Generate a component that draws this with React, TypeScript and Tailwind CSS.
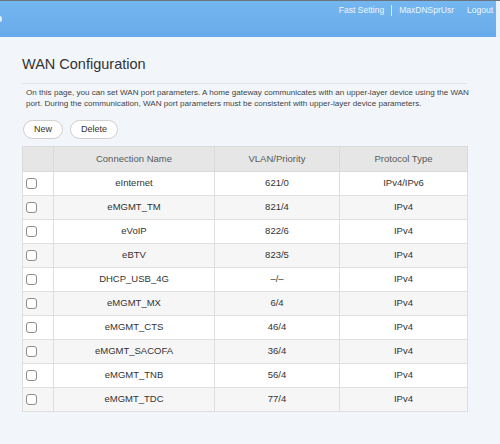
const rows = [
  { name: "eInternet", vlan: "621/0", proto: "IPv4/IPv6" },
  { name: "eMGMT_TM", vlan: "821/4", proto: "IPv4" },
  { name: "eVoIP", vlan: "822/6", proto: "IPv4" },
  { name: "eBTV", vlan: "823/5", proto: "IPv4" },
  { name: "DHCP_USB_4G", vlan: "–/–", proto: "IPv4" },
  { name: "eMGMT_MX", vlan: "6/4", proto: "IPv4" },
  { name: "eMGMT_CTS", vlan: "46/4", proto: "IPv4" },
  { name: "eMGMT_SACOFA", vlan: "36/4", proto: "IPv4" },
  { name: "eMGMT_TNB", vlan: "56/4", proto: "IPv4" },
  { name: "eMGMT_TDC", vlan: "77/4", proto: "IPv4" },
];

const TopBar = () => (
  <header className="flex h-[37px] border-t border-[#6b7480]">
    <div className="relative flex-1 bg-gradient-to-b from-[#74b6ef] to-[#68abea]">
      <div className="absolute left-[-3px] top-[15px] h-[6px] w-[5px] rounded-full bg-white/80" />
      <nav className="flex items-center justify-end pt-[3px] pr-[3px] text-[8.5px] text-[#eef6fd]">
        <span>Fast Setting</span>
        <span className="mx-[7px] h-[11px] w-px bg-white/70" />
        <span>MaxDNSprUsr</span>
        <span className="ml-[13px]">Logout</span>
      </nav>
    </div>
    <div className="w-[4px] bg-[#eaf2fb]" />
  </header>
);

const Checkbox = () => (
  <span className="block h-[11px] w-[11px] rounded-[3px] border border-[#8c8c8c] bg-white" />
);

export default function App() {
  return (
    <div
      className="h-[444px] w-[500px] overflow-hidden bg-[#f2f6fb] text-[#333]"
      style={{ fontFamily: '"Liberation Sans", Arial, sans-serif' }}
    >
      <TopBar />
      <main className="pl-[22px]">
        <h1 className="mt-[16px] text-[14.5px] leading-[22px] text-[#333]">WAN Configuration</h1>
        <div className="mt-[8px] h-px w-[445px] bg-[#e1e5ea]" />
        <p className="mt-[4px] w-[450px] pl-[4px] text-[8.1px] leading-[10.5px] text-[#444]">
          On this page, you can set WAN port parameters. A home gateway communicates with an upper-layer device using the WAN
          port. During the communication, WAN port parameters must be consistent with upper-layer device parameters.
        </p>
        <div className="mt-[11px] flex gap-[7px] pl-px">
          <button className="h-[19px] w-[40px] rounded-full border border-[#cfcfcf] bg-white text-[9px] text-[#333]">
            New
          </button>
          <button className="h-[19px] w-[48px] rounded-full border border-[#cfcfcf] bg-white text-[9px] text-[#333]">
            Delete
          </button>
        </div>
        <table className="mt-[7px] w-[445px] table-fixed border-collapse text-[9.5px]">
          <colgroup>
            <col className="w-[31px]" />
            <col className="w-[161px]" />
            <col className="w-[125px]" />
            <col className="w-[128px]" />
          </colgroup>
          <thead>
            <tr className="h-[25px] bg-[#e6e6e6] text-[#595959]">
              <th className="border border-[#dadada] font-normal" />
              <th className="border border-[#dadada] font-normal">Connection Name</th>
              <th className="border border-[#dadada] font-normal">VLAN/Priority</th>
              <th className="border border-[#dadada] font-normal">Protocol Type</th>
            </tr>
          </thead>
          <tbody>
            {rows.map((r, i) => (
              <tr key={r.name} className={`h-[24px] ${i % 2 ? "bg-[#f6f6f6]" : "bg-white"}`}>
                <td className="border border-[#dedede] pl-[3px]">
                  <Checkbox />
                </td>
                <td className="border border-[#dedede] text-center">{r.name}</td>
                <td className="border border-[#dedede] text-center">{r.vlan}</td>
                <td className="border border-[#dedede] text-center">{r.proto}</td>
              </tr>
            ))}
          </tbody>
        </table>
      </main>
    </div>
  );
}
